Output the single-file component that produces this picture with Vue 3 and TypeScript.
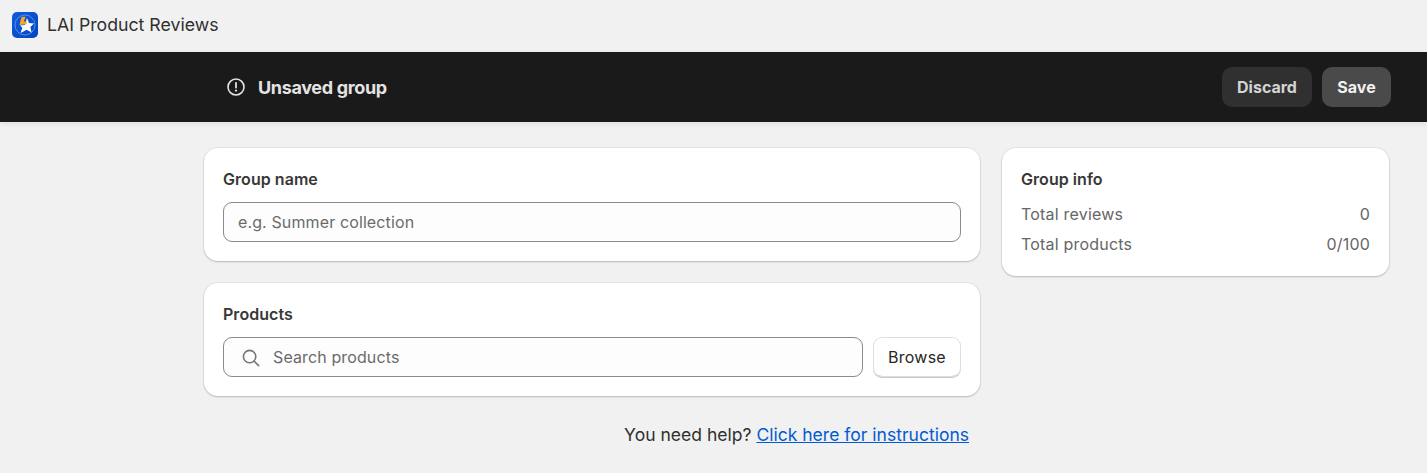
<script setup lang="ts">
interface InfoRow {
  label: string
  value: string
}

const infoRows: InfoRow[] = [
  { label: 'Total reviews', value: '0' },
  { label: 'Total products', value: '0/100' },
]
</script>

<template>
  <div class="page">
    <header class="app-header">
      <svg class="logo" width="26" height="26" viewBox="0 0 26 26">
        <defs>
          <linearGradient id="logo-bg" x1="0" y1="0" x2="1" y2="1">
            <stop offset="0" stop-color="#0f5ce0" />
            <stop offset="1" stop-color="#0444bd" />
          </linearGradient>
        </defs>
        <rect width="26" height="26" rx="5" fill="url(#logo-bg)" />
        <circle cx="13" cy="13" r="10" fill="none" stroke="#6b9bf0" stroke-width="0.8" />
        <path d="M15 6 L17 11 L22 11.6 L18.4 15 L19.6 20.4 L14.6 17.8 L8.6 21 L10.4 15.8 L8 13.6 L12.8 13 Z" fill="#fff" />
        <path d="M9.6 4.8 L13.6 4.8 L11.8 9.4 L15 9.4 L14.4 12.2 L7.4 13 Z" fill="#f7a823" />
      </svg>
      <span class="app-name">LAI Product Reviews</span>
    </header>

    <div class="save-bar">
      <div class="save-status">
        <svg width="20" height="20" viewBox="0 0 20 20" fill="none">
          <circle cx="10" cy="10" r="8" stroke="#e3e3e3" stroke-width="1.6" />
          <path d="M10 5.8v4.8" stroke="#e3e3e3" stroke-width="1.8" stroke-linecap="round" />
          <circle cx="10" cy="13.6" r="1.1" fill="#e3e3e3" />
        </svg>
        <span>Unsaved group</span>
      </div>
      <div class="save-actions">
        <button class="btn-discard">Discard</button>
        <button class="btn-save">Save</button>
      </div>
    </div>

    <main class="layout">
      <div class="main-col">
        <section class="card">
          <h2 class="card-title">Group name</h2>
          <div class="field">
            <input class="input" type="text" placeholder="e.g. Summer collection" />
          </div>
        </section>

        <section class="card">
          <h2 class="card-title">Products</h2>
          <div class="search-row">
            <div class="field search-field">
              <svg class="search-icon" width="20" height="20" viewBox="0 0 20 20" fill="none">
                <circle cx="8.6" cy="8.6" r="6.2" stroke="#757575" stroke-width="1.6" />
                <path d="M13.2 13.2 L17.6 17.6" stroke="#757575" stroke-width="1.6" stroke-linecap="round" />
              </svg>
              <input class="input" type="text" placeholder="Search products" />
            </div>
            <button class="btn-browse">Browse</button>
          </div>
        </section>

        <p class="help">You need help? <a href="#">Click here for instructions</a></p>
      </div>

      <aside class="side-col">
        <section class="card">
          <h2 class="card-title">Group info</h2>
          <div class="info-list">
            <div v-for="row in infoRows" :key="row.label" class="info-row">
              <span>{{ row.label }}</span>
              <span>{{ row.value }}</span>
            </div>
          </div>
        </section>
      </aside>
    </main>
  </div>
</template>

<style>
html,
body {
  margin: 0;
  background: #f1f1f1;
}
</style>

<style scoped>
.page {
  font-family: Inter, "Liberation Sans", sans-serif;
  color: #303030;
  min-height: 473px;
  background: #f1f1f1;
}

.app-header {
  height: 52px;
  box-sizing: border-box;
  padding: 0 12px;
  display: flex;
  align-items: center;
  gap: 9px;
}

.logo {
  flex: none;
  margin-top: -3px;
}

.app-name {
  font-size: 17.7px;
  color: #303030;
  margin-top: -3px;
}

.save-bar {
  height: 70px;
  box-sizing: border-box;
  background: #1a1a1a;
  padding: 0 36px 0 226px;
  display: flex;
  align-items: center;
  justify-content: space-between;
  box-shadow: 0 2px 6px rgba(0, 0, 0, 0.08);
}

.save-status {
  display: flex;
  align-items: center;
  gap: 12px;
  font-size: 18px;
  font-weight: 700;
  color: #e3e3e3;
  letter-spacing: -0.34px;
}

.save-actions {
  display: flex;
  gap: 10px;
}

.save-actions button {
  height: 40px;
  border: 0;
  border-radius: 10px;
  font-family: inherit;
  font-size: 16px;
  font-weight: 700;
}

.btn-discard {
  width: 90px;
  background: #303030;
  color: #d4d4d4;
}

.btn-save {
  width: 69px;
  background: #4a4a4a;
  color: #f1f1f1;
}

.layout {
  display: grid;
  grid-template-columns: 776px 387px;
  gap: 22px;
  padding: 26px 0 0 204px;
  align-items: start;
}

.main-col {
  display: flex;
  flex-direction: column;
  gap: 22px;
}

.card {
  background: #fff;
  border-radius: 14px;
  padding: 20px 19px 19px;
  box-shadow: 0 1px 2px rgba(0, 0, 0, 0.2), 0 0 0 1px rgba(0, 0, 0, 0.05);
}

.card-title {
  margin: 0 0 12px;
  font-size: 16px;
  line-height: 22px;
  font-weight: 600;
  letter-spacing: 0.05px;
  color: #383838;
}

.field {
  height: 40px;
  box-sizing: border-box;
  border: 1px solid #8a8a8a;
  border-radius: 9px;
  background: #fdfdfd;
  display: flex;
  align-items: center;
  padding: 0 14px;
}

.input {
  flex: 1;
  min-width: 0;
  border: 0;
  outline: 0;
  padding: 0;
  background: transparent;
  font-family: inherit;
  font-size: 16px;
  letter-spacing: 0.12px;
  color: #303030;
}

.input::placeholder {
  color: #6b6b6b;
  opacity: 1;
}

.search-row {
  display: flex;
  gap: 10px;
}

.search-field {
  flex: 1;
  padding-left: 17px;
  gap: 12px;
}

.search-icon {
  flex: none;
  margin-top: 1px;
}

.btn-browse {
  width: 88px;
  height: 40px;
  border: 0;
  border-radius: 9px;
  background: #fff;
  font-family: inherit;
  font-size: 16px;
  font-weight: 400;
  letter-spacing: 0.25px;
  color: #262626;
  box-shadow: inset 0 0 0 1px #dedede, inset 0 -2px 0 -1px #bdbdbd, 0 1px 0 #c9c9c9;
}

.help {
  margin: 5px 11px 0 0;
  text-align: right;
  font-size: 17.55px;
  line-height: 24px;
  color: #303030;
}

.help a {
  color: #005bd3;
}

.info-list {
  display: flex;
  flex-direction: column;
  gap: 8px;
  margin-top: 13px;
  padding-bottom: 2px;
}

.info-row {
  display: flex;
  justify-content: space-between;
  font-size: 16px;
  letter-spacing: 0.2px;
  line-height: 22px;
  color: #666;
}
</style>
